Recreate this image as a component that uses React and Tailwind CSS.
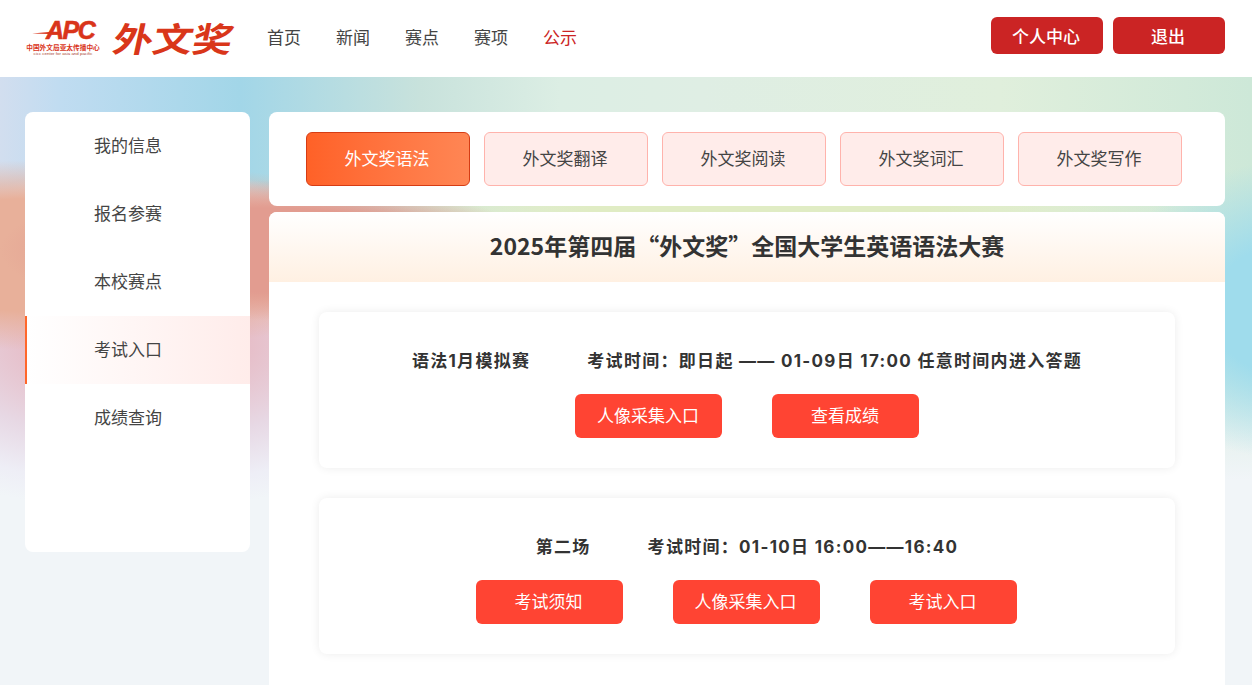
const navItems = ["首页", "新闻", "赛点", "赛项", "公示"];
const sideItems = ["我的信息", "报名参赛", "本校赛点", "考试入口", "成绩查询"];
const tabs = ["外文奖语法", "外文奖翻译", "外文奖阅读", "外文奖词汇", "外文奖写作"];

function Logo() {
  return (
    <div className="flex items-center">
      <div className="flex w-[76px] flex-col items-center">
        <div className="relative h-[21px] w-full">
          <svg className="absolute left-0 top-0" width="76" height="21" viewBox="0 0 76 21">
            <path d="M7 13.5 L24 12 L30 8 L25 14 Z" fill="#d9341a" />
          </svg>
          <span className="absolute left-[21px] top-[-3px] text-[25px] font-bold italic leading-[26px] tracking-[-1.5px] text-[#d9341a] [-webkit-text-stroke:0.6px_#d9341a] font-['Liberation_Sans',sans-serif]">
            APC
          </span>
        </div>
        <div className="mt-[2px] whitespace-nowrap text-[6.7px] font-bold leading-[8px] text-[#d9341a]">
          中国外文局亚太传播中心
        </div>
        <div className="whitespace-nowrap text-[4.4px] leading-[6px] text-[#a8442f] font-['Liberation_Sans',sans-serif]">
          cicc center for asia and pacific
        </div>
      </div>
      <div className="mb-[2px] ml-[13px] w-[119px] origin-left whitespace-nowrap text-[34px] font-bold leading-[38px] text-[#d9361a] [transform:skewX(-12deg)_scaleX(1.17)]">
        外文奖
      </div>
    </div>
  );
}

function ExamButton({ children }) {
  return (
    <button className="h-[44px] w-[147px] rounded-md bg-[#ff4433] pb-[2px] pr-px text-[17px] text-white">
      {children}
    </button>
  );
}

function ExamCard({ name, time, buttons, rowClass }) {
  return (
    <div className="mb-[30px] h-[156px] rounded-lg bg-white pt-[37px] shadow-[0_0_10px_rgba(0,0,0,0.08)]">
      <div className="flex h-[24px] items-center justify-center gap-[57px] pb-px text-[17px] font-bold leading-[24px] tracking-[1.3px] text-[#333] font-['Inter','Noto_Sans_CJK_SC',sans-serif]">
        <span>{name}</span>
        <span>{time}</span>
      </div>
      <div className={`mt-[21px] flex justify-center gap-[50px] ${rowClass || ""}`}>
        {buttons.map((b) => (
          <ExamButton key={b}>{b}</ExamButton>
        ))}
      </div>
    </div>
  );
}

export default function App() {
  return (
    <div className="flex h-screen flex-col overflow-hidden font-['Noto_Sans_CJK_SC',sans-serif] bg-[radial-gradient(ellipse_270px_70px_at_270px_250px,#e29c90_0%,#e29c90_60%,transparent_100%),radial-gradient(ellipse_400px_95px_at_60px_255px,#e8b09a_0%,#e8b09a_60%,transparent_100%),radial-gradient(ellipse_340px_170px_at_140px_340px,#e6b8c2_0%,#e6b8c2_25%,#e7d8e4_60%,#eeeef6_85%,transparent_100%),radial-gradient(ellipse_200px_150px_at_1300px_310px,#9fdcec_0%,#9fdcec_45%,transparent_100%),radial-gradient(ellipse_420px_60px_at_760px_208px,#e0ecc4_0%,#e0ecc4_40%,transparent_100%),linear-gradient(to_bottom,transparent_0px,transparent_330px,#f1f5f8_480px),linear-gradient(to_right,#d2deef_0px,#c0dcf1_60px,#a2d6e8_240px,#c8e2dc_420px,#dceee4_560px,#dfeee4_700px,#e0efdc_1000px,#cde8d8_1252px)]">
      <header className="flex h-[77px] shrink-0 items-center bg-white pl-[25px] pr-[27px]">
        <Logo />
        <nav className="mb-[3px] ml-[34px] flex gap-[35px] text-[17px] text-[#444]">
          {navItems.map((item) => (
            <span key={item} className={item === "公示" ? "text-[#cb2424]" : ""}>
              {item}
            </span>
          ))}
        </nav>
        <div className="mb-[6px] ml-auto flex gap-[10px]">
          <button className="h-[37px] w-[112px] rounded-md bg-[#cb2424] pr-[2px] text-[17px] font-medium text-white">
            个人中心
          </button>
          <button className="h-[37px] w-[112px] rounded-md bg-[#cb2424] pr-[2px] text-[17px] font-medium text-white">
            退出
          </button>
        </div>
      </header>

      <div className="flex min-h-0 flex-1 gap-[19px] pl-[25px] pr-[27px] pt-[35px]">
        <aside className="h-[440px] w-[225px] shrink-0 rounded-lg bg-white">
          {sideItems.map((item) => (
            <div
              key={item}
              className={
                item === "考试入口"
                  ? "flex h-[68px] items-center border-l-2 border-[#ff672b] bg-gradient-to-r from-white to-[#ffecea] pl-[67px] pb-[2px] text-[17px] text-[#444]"
                  : "flex h-[68px] items-center pl-[69px] pb-[2px] text-[17px] text-[#444]"
              }
            >
              {item}
            </div>
          ))}
        </aside>

        <main className="flex min-w-0 flex-1 flex-col gap-[6px]">
          <div className="flex h-[94px] shrink-0 items-center gap-[14px] rounded-lg bg-white pl-[37px]">
            {tabs.map((tab) => (
              <button
                key={tab}
                className={
                  tab === "外文奖语法"
                    ? "h-[54px] w-[164px] rounded-md border border-[#d63c14] bg-gradient-to-r from-[#ff6127] to-[#ff8654] pb-[2px] pr-[2px] text-[17px] text-white"
                    : "h-[54px] w-[164px] rounded-md border border-[#ffb3ac] bg-[#ffecea] pb-[2px] pr-[2px] text-[17px] text-[#444]"
                }
              >
                {tab}
              </button>
            ))}
          </div>

          <div className="flex-1 rounded-t-lg bg-white">
            <h1 className="flex h-[70px] items-center justify-center rounded-t-lg bg-gradient-to-b from-white to-[#fff0e2] pb-[3px] text-[23px] font-bold text-[#333]">
              2025年第四届“外文奖”全国大学生英语语法大赛
            </h1>
            <div className="px-[50px] pt-[30px]">
              <ExamCard
                name="语法1月模拟赛"
                time="考试时间：即日起 —— 01-09日 17:00 任意时间内进入答题"
                buttons={["人像采集入口", "查看成绩"]}
              />
              <ExamCard
                name="第二场"
                time="考试时间：01-10日 16:00——16:40"
                buttons={["考试须知", "人像采集入口", "考试入口"]}
                rowClass="pr-[2px]"
              />
            </div>
          </div>
        </main>
      </div>
    </div>
  );
}
